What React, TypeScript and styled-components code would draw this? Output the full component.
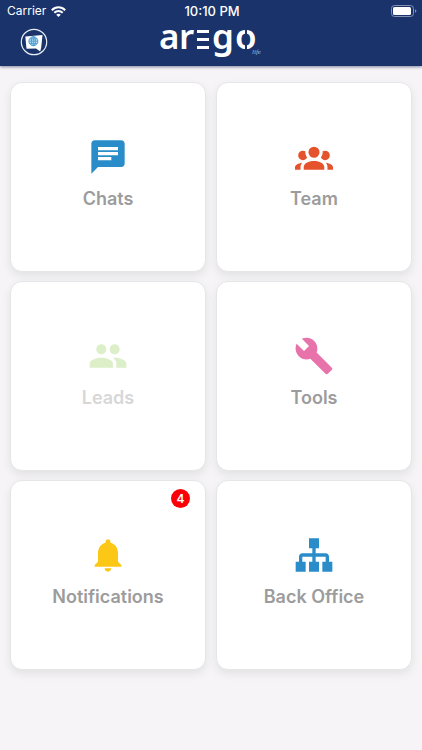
import React from 'react';
import styled, { createGlobalStyle } from 'styled-components';
import { MdBuild, MdChat, MdNotifications, MdPeople } from 'react-icons/md';

const GlobalStyle = createGlobalStyle`
  *, *::before, *::after { box-sizing: border-box; }
  body {
    margin: 0;
    background: #f6f4f6;
    font-family: Inter, "Liberation Sans", sans-serif;
  }
`;

const Header = styled.header`
  background: #1a336b;
  color: #fff;
  box-shadow: 0 1px 3px rgba(26, 40, 90, 0.55);
`;

const StatusBar = styled.div`
  display: grid;
  grid-template-columns: 1fr auto 1fr;
  align-items: center;
  height: 22px;
  padding: 0 5px 0 7px;
  font-size: 12px;
  line-height: 22px;
`;

const Carrier = styled.span`
  display: flex;
  align-items: center;
  gap: 5px;
`;

const Clock = styled.time`
  font-size: 13px;
  font-weight: 500;
  line-height: 16px;
`;

const BatterySlot = styled.span`
  display: flex;
  justify-content: flex-end;
`;

const NavBar = styled.div`
  display: grid;
  grid-template-columns: 1fr auto 1fr;
  align-items: start;
  height: 44px;
  padding: 0 20px;
`;

const SiteButton = styled.button`
  display: flex;
  justify-self: start;
  margin-top: 6px;
  padding: 0;
  border: 0;
  background: none;
  cursor: pointer;
`;

const Brand = styled.h1`
  display: flex;
  margin: 0;
`;

const Logo = styled.svg`
  overflow: visible;
`;

const CardGrid = styled.main`
  display: grid;
  grid-template-columns: 1fr 1fr;
  gap: 9px 10px;
  padding: 16px 10px 80px;
`;

const Card = styled.button`
  position: relative;
  display: flex;
  flex-direction: column;
  align-items: center;
  justify-content: center;
  gap: 10px;
  min-height: 190px;
  padding: 0 0 7px;
  border: 1px solid #e6e6e8;
  border-radius: 12px;
  background: #fff;
  box-shadow: 0 4px 8px rgba(60, 80, 70, 0.1);
  font-family: inherit;
  cursor: pointer;
`;

const IconBox = styled.span<{ $color: string; $dim?: boolean }>`
  display: flex;
  align-items: center;
  justify-content: center;
  width: 40px;
  height: 40px;
  color: ${({ $color }) => $color};
  opacity: ${({ $dim }) => ($dim ? 0.4 : 1)};
`;

const Label = styled.span<{ $dim?: boolean }>`
  color: #9c9c9c;
  font-size: 18px;
  font-weight: 600;
  line-height: 24px;
  opacity: ${({ $dim }) => ($dim ? 0.4 : 1)};
`;

const Badge = styled.span`
  position: absolute;
  top: 8px;
  right: 15px;
  width: 19px;
  height: 19px;
  border-radius: 50%;
  background: #fb0007;
  color: #fff;
  font-size: 12px;
  font-weight: 600;
  line-height: 19px;
  text-align: center;
`;

const WifiIcon = () => (
  <svg width="15" height="11" viewBox="0 0 15 11" aria-hidden="true" fill="none" stroke="#fff" strokeWidth="2">
    <path d="M0.8 4.2C4.6 0.3 10.4 0.3 14.2 4.2" />
    <path d="M3.3 6.8C5.7 4.4 9.3 4.4 11.7 6.8" />
    <path d="M7.5 11 5.2 8.7Q7.5 6.8 9.8 8.7Z" fill="#fff" stroke="none" />
  </svg>
);

const BatteryIcon = () => (
  <svg width="26" height="12" viewBox="0 0 26 12" aria-hidden="true">
    <rect x="0.5" y="0.5" width="22" height="11" rx="3" fill="none" stroke="#8291b3" />
    <rect x="2" y="2" width="18" height="8" rx="1.5" fill="#fff" />
    <path d="M24 4.2Q25.4 4.8 25.4 6T24 7.8Z" fill="#8291b3" />
  </svg>
);

const GlobeChatIcon = () => (
  <svg width="28" height="28" viewBox="0 0 28 28" aria-hidden="true">
    <circle cx="14" cy="14" r="12.7" fill="none" stroke="#e8edf7" strokeWidth="1.2" />
    <path d="M5.3 8.6 22.5 7 21.2 19.4 20.2 23.6 16 20.4 6.5 20.7Z" fill="#fff" />
    <g fill="none" stroke="#4e9ed0" strokeWidth="1">
      <circle cx="13.4" cy="13.2" r="4.5" fill="#b5d9ef" />
      <ellipse cx="13.4" cy="13.2" rx="2" ry="4.5" />
      <path d="M9 13.2H18M13.4 8.7V17.7M9.8 10.9H17M9.8 15.5H17" strokeWidth="0.8" />
    </g>
  </svg>
);

const Wordmark = () => (
  <Logo width="102" height="38" viewBox="0 0 102 38" role="img" aria-label="arego life">
    <g fill="#fff" fontFamily="'Noto Sans', sans-serif" fontSize="35" fontWeight="600">
      <text x="-1" y="27">a</text>
      <text x="19" y="27">r</text>
      <text x="52" y="27">g</text>
      <text x="75" y="27">o</text>
    </g>
    <path d="M37 9.5H49M37 17.5H49M37 25.5H49" stroke="#fff" strokeWidth="2.8" />
    <path d="M86 6V12M86 22V29" stroke="#1a336b" strokeWidth="2" />
    <text x="92" y="32" fill="#aebbd8" fontFamily="'Liberation Serif', serif" fontStyle="italic" fontWeight="400" fontSize="7">life</text>
  </Logo>
);

const TeamIcon = () => (
  <svg width="38" height="38" viewBox="0 0 24 24" fill="currentColor" aria-hidden="true">
    <path d="M12,5.5A3.5,3.5 0 0,1 15.5,9A3.5,3.5 0 0,1 12,12.5A3.5,3.5 0 0,1 8.5,9A3.5,3.5 0 0,1 12,5.5M5,8C5.56,8 6.08,8.15 6.53,8.42C6.38,9.85 6.8,11.27 7.66,12.38C7.16,13.34 6.16,14 5,14A3,3 0 0,1 2,11A3,3 0 0,1 5,8M19,8A3,3 0 0,1 22,11A3,3 0 0,1 19,14C17.84,14 16.84,13.34 16.34,12.38C17.2,11.27 17.62,9.85 17.47,8.42C17.92,8.15 18.44,8 19,8M5.5,18.25C5.5,16.18 8.41,14.5 12,14.5C15.59,14.5 18.5,16.18 18.5,18.25V20H5.5V18.25M0,20V18.5C0,17.11 1.89,15.94 4.45,15.6C3.86,16.28 3.5,17.22 3.5,18.25V20H0M24,20H20.5V18.25C20.5,17.22 20.14,16.28 19.55,15.6C22.11,15.94 24,17.11 24,18.5V20Z" />
  </svg>
);

const SitemapIcon = () => (
  <svg width="40" height="40" viewBox="0 0 24 24" fill="currentColor" aria-hidden="true">
    <path d="M9,2V8H11V11H5C3.89,11 3,11.89 3,13V16H1V22H7V16H5V13H11V16H9V22H15V16H13V13H19V16H17V22H23V16H21V13C21,11.89 20.11,11 19,11H13V8H15V2H9Z" />
  </svg>
);

type Item = {
  label: string;
  color: string;
  icon: React.ReactNode;
  dim?: boolean;
  badge?: number;
};

const items: Item[] = [
  { label: 'Chats', color: '#2a8dc9', icon: <MdChat size={40} /> },
  { label: 'Team', color: '#e5532d', icon: <TeamIcon /> },
  { label: 'Leads', color: '#a9d977', icon: <MdPeople size={40} />, dim: true },
  { label: 'Tools', color: '#e873ab', icon: <MdBuild size={40} /> },
  { label: 'Notifications', color: '#fdc716', icon: <MdNotifications size={40} />, badge: 4 },
  { label: 'Back Office', color: '#2a8dc9', icon: <SitemapIcon /> },
];

export default function App() {
  return (
    <>
      <GlobalStyle />
      <Header>
        <StatusBar>
          <Carrier>
            Carrier
            <WifiIcon />
          </Carrier>
          <Clock>10:10 PM</Clock>
          <BatterySlot>
            <BatteryIcon />
          </BatterySlot>
        </StatusBar>
        <NavBar>
          <SiteButton type="button" aria-label="Website">
            <GlobeChatIcon />
          </SiteButton>
          <Brand>
            <Wordmark />
          </Brand>
        </NavBar>
      </Header>
      <CardGrid>
        {items.map(({ label, color, icon, dim, badge }) => (
          <Card key={label} type="button" disabled={dim}>
            {badge !== undefined && <Badge>{badge}</Badge>}
            <IconBox $color={color} $dim={dim}>
              {icon}
            </IconBox>
            <Label $dim={dim}>{label}</Label>
          </Card>
        ))}
      </CardGrid>
    </>
  );
}
